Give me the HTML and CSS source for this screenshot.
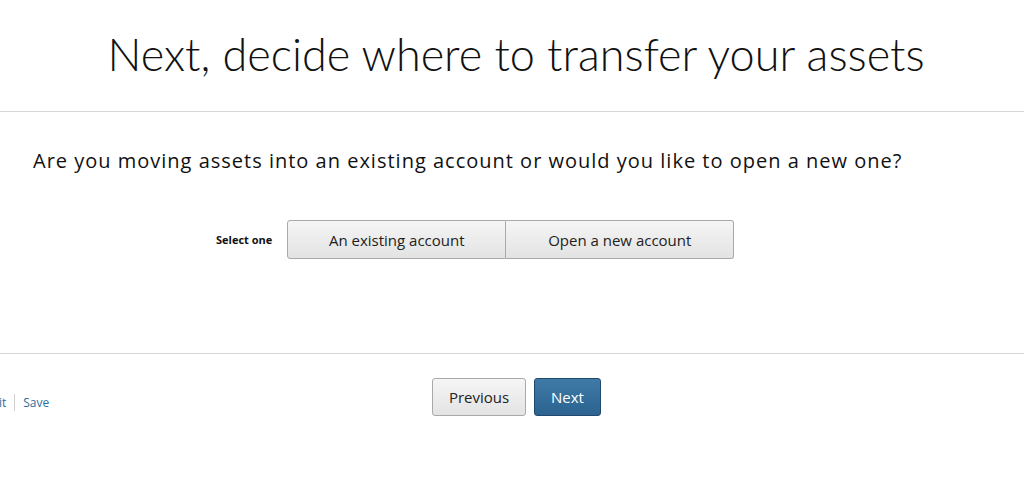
FILE: index.html
```html
<!DOCTYPE html>
<html lang="en">
<head>
    <meta charset="UTF-8">
    <meta name="viewport" content="width=device-width, initial-scale=1.0">
    <title>Transfer Assets</title>
    <link rel="stylesheet" href="styles.css">
</head>
<body>

    <header class="page-header">
        <h1>Next, decide where to transfer your assets</h1>
    </header>

    <section class="question">
        <p class="question-text">Are you moving assets into an existing account or would you like to open a new one?</p>

        <div class="select-row">
            <span class="select-label">Select one</span>
            <div class="segmented">
                <button class="seg-btn seg-left" type="button">An existing account</button>
                <button class="seg-btn seg-right" type="button">Open a new account</button>
            </div>
        </div>
    </section>

    <footer class="page-footer">
        <div class="footer-links">
            <a href="#">Exit</a>
            <span class="divider"></span>
            <a href="#">Save</a>
        </div>
        <div class="nav-buttons">
            <button class="btn btn-secondary" type="button">Previous</button>
            <button class="btn btn-primary" type="button">Next</button>
        </div>
    </footer>

</body>
</html>
```

FILE: styles.css
```css
body {
    margin: 0;
    font-family: "Open Sans", Lato, sans-serif;
    color: #111;
    background: #fff;
}

.page-header {
    border-bottom: 1px solid #d6d6d6;
    height: 111px;
    display: flex;
    justify-content: center;
}

.page-header h1 {
    margin: 0 0 0 8px;
    padding-top: 26px;
    font-family: Lato, sans-serif;
    font-size: 45px;
    font-weight: 300;
    line-height: 56px;
    color: #111;
}

.question {
    height: 241px;
    border-bottom: 1px solid #d6d6d6;
}

.question-text {
    margin: 0;
    padding: 35px 0 0 33px;
    font-size: 20px;
    letter-spacing: 1px;
    line-height: 28px;
    color: #111;
}

.select-row {
    display: flex;
    align-items: center;
    margin-top: 45px;
    padding-left: 216px;
}

.select-label {
    font-size: 11px;
    font-weight: bold;
    margin-right: 15px;
}

.segmented {
    display: flex;
}

.seg-btn {
    height: 39px;
    font-family: "Open Sans", Lato, sans-serif;
    font-size: 15px;
    color: #222;
    background: linear-gradient(#f5f5f5, #e3e3e3);
    border: 1px solid #a9a9a9;
    cursor: pointer;
}

.seg-left {
    width: 219px;
    border-radius: 3px 0 0 3px;
}

.seg-right {
    width: 228px;
    border-left: none;
    border-radius: 0 3px 3px 0;
}

.page-footer {
    display: flex;
    align-items: center;
    padding-top: 24px;
}

.footer-links {
    display: flex;
    align-items: center;
    margin: 10px 0 0 -14px;
    width: 446px;
    font-size: 12px;
}

.footer-links a {
    color: #2f6e9c;
    text-decoration: none;
}

.divider {
    width: 1px;
    height: 17px;
    background: #cfcfcf;
    margin: 0 8px;
}

.nav-buttons {
    display: flex;
    gap: 8px;
}

.btn {
    height: 38px;
    font-family: "Open Sans", Lato, sans-serif;
    font-size: 15px;
    border-radius: 3px;
    cursor: pointer;
}

.btn-secondary {
    width: 94px;
    color: #222;
    background: linear-gradient(#f5f5f5, #e3e3e3);
    border: 1px solid #a9a9a9;
}

.btn-primary {
    width: 67px;
    color: #fff;
    background: linear-gradient(#3f7aa6, #2c6390);
    border: 1px solid #1f4a6e;
}
```
